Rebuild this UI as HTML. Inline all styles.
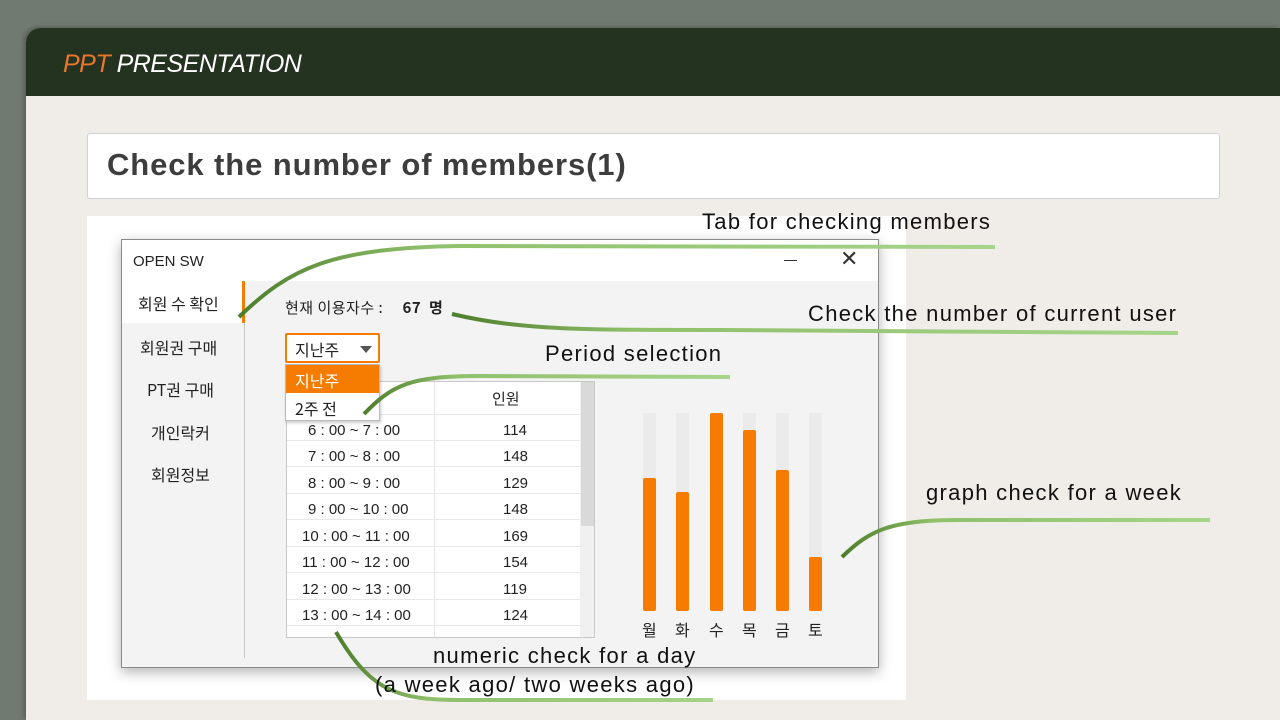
<!DOCTYPE html>
<html><head><meta charset="utf-8"><style>
*{margin:0;padding:0;box-sizing:border-box}
body{width:1280px;height:720px;overflow:hidden;background:#717a70;position:relative;font-family:"Liberation Sans","Noto Sans CJK KR",sans-serif}
.a{position:absolute}
.k{font-family:"Noto Sans CJK KR","Liberation Sans",sans-serif}
.ann{position:absolute;font-size:22px;color:#111;white-space:nowrap;letter-spacing:1.3px;font-family:"Liberation Sans","Noto Sans CJK KR",sans-serif}
.row{position:absolute;left:0;width:294px;height:26px;border-bottom:1px solid #e8e8e8;font-size:15px;color:#222}
.row span{position:absolute;top:7px}
</style></head><body>
<div class="a" style="left:26px;top:28px;width:1254px;height:692px;background:#f0ede8;border-top-left-radius:14px;overflow:hidden;box-shadow:-2px -1px 4px rgba(0,0,0,.25)">
 <div class="a" style="left:0;top:0;width:1254px;height:68px;background:#243220"></div>
 <div class="a" style="left:37px;top:22px;font-size:25px;font-style:italic;color:#fff;letter-spacing:-0.5px"><span style="color:#e8772e">PPT</span> PRESENTATION</div>
</div>
<div class="a" style="left:87px;top:133px;width:1133px;height:66px;background:#fff;border:1px solid #d0d0d8;border-radius:3px"></div>
<div class="a" style="left:107px;top:147px;font-size:31px;font-weight:bold;color:#3d3d3d;letter-spacing:0.9px">Check the number of members(1)</div>
<div class="a" style="left:87px;top:216px;width:819px;height:484px;background:#fff"></div>
<!-- window -->
<div class="a" style="left:121px;top:239px;width:758px;height:429px;background:#f3f3f3;border:1px solid #8a8a8a;box-shadow:0 4px 12px rgba(0,0,0,.3)">
 <div class="a" style="left:0;top:0;width:756px;height:41px;background:#fff"></div>
 <div class="a" style="left:11px;top:13px;font-size:15px;color:#222">OPEN SW</div>
 <div class="a" style="left:662px;top:20px;width:13px;height:1px;background:#333"></div>
 <div class="a" style="left:718px;top:6px;font-size:22px;color:#333;font-weight:300">✕</div>
 <div class="a" style="left:0;top:41px;width:123px;height:42px;background:#fff"></div>
 <div class="a" style="left:120px;top:41px;width:3px;height:42px;background:#f57c00"></div>
 <div class="a" style="left:122px;top:83px;width:1px;height:335px;background:#c8c8c8"></div>
 <div class="a k" style="left:16px;top:51px;font-size:16px;color:#222">회원 수 확인</div>
 <div class="a k" style="left:18px;top:95px;font-size:16px;color:#222">회원권 구매</div>
 <div class="a k" style="left:25px;top:137px;font-size:16px;color:#222">PT권 구매</div>
 <div class="a k" style="left:29px;top:180px;font-size:16px;color:#222">개인락커</div>
 <div class="a k" style="left:29px;top:222px;font-size:16px;color:#222">회원정보</div>
 <div class="a k" style="left:163px;top:57px;font-size:15px;color:#222;letter-spacing:0.5px">현재 이용자수 :&nbsp;&nbsp;&nbsp;&nbsp;&nbsp;<b>67&nbsp; 명</b></div>
 <!-- table -->
 <div class="a" style="left:164px;top:141px;width:309px;height:257px;background:#fff;border:1px solid #c8c8c8;overflow:hidden">
  <div class="a" style="left:147px;top:0;width:1px;height:257px;background:#e4e4e4"></div>
  <div class="a" style="left:293px;top:0;width:15px;height:257px;background:#f0f0f0"></div>
  <div class="a" style="left:294px;top:0;width:13px;height:144px;background:#d9d9d9"></div>
  <div class="row" style="top:0;height:33px"><span class="k" style="left:205px;top:6px">인원</span></div>
  <div class="row" style="top:33px"><span style="left:21px">6 : 00 ~ 7 : 00</span><span style="left:216px">114</span></div>
  <div class="row" style="top:59px"><span style="left:21px">7 : 00 ~ 8 : 00</span><span style="left:216px">148</span></div>
  <div class="row" style="top:86px"><span style="left:21px">8 : 00 ~ 9 : 00</span><span style="left:216px">129</span></div>
  <div class="row" style="top:112px"><span style="left:21px">9 : 00 ~ 10 : 00</span><span style="left:216px">148</span></div>
  <div class="row" style="top:139px"><span style="left:15px">10 : 00 ~ 11 : 00</span><span style="left:216px">169</span></div>
  <div class="row" style="top:165px"><span style="left:15px">11 : 00 ~ 12 : 00</span><span style="left:216px">154</span></div>
  <div class="row" style="top:192px"><span style="left:15px">12 : 00 ~ 13 : 00</span><span style="left:216px">119</span></div>
  <div class="row" style="top:218px"><span style="left:15px">13 : 00 ~ 14 : 00</span><span style="left:216px">124</span></div>
  <div class="row" style="top:245px"><span style="left:15px">14 : 00 ~ 15 : 00</span><span style="left:216px">133</span></div>
 </div>
 <!-- dropdown -->
 <div class="a" style="left:163px;top:93px;width:95px;height:30px;background:#fff;border:2px solid #f57c00;border-radius:2px"></div>
 <div class="a k" style="left:173px;top:97px;font-size:16px;color:#222">지난주</div>
 <div class="a" style="left:238px;top:106px;width:0;height:0;border-left:6px solid transparent;border-right:6px solid transparent;border-top:7px solid #555"></div>
 <div class="a" style="left:163px;top:124px;width:95px;height:57px;background:#fff;border:1px solid #bbb;box-shadow:1px 2px 3px rgba(0,0,0,.2)"></div>
 <div class="a" style="left:164px;top:125px;width:93px;height:28px;background:#f57c00"></div>
 <div class="a k" style="left:173px;top:128px;font-size:16px;color:#fff">지난주</div>
 <div class="a k" style="left:173px;top:156px;font-size:16px;color:#222">2주 전</div>
 <!-- bars -->
 <div class="a" style="left:521px;top:173px;width:13px;height:198px;background:#ebebeb"></div>
 <div class="a" style="left:554px;top:173px;width:13px;height:198px;background:#ebebeb"></div>
 <div class="a" style="left:588px;top:173px;width:13px;height:198px;background:#ebebeb"></div>
 <div class="a" style="left:621px;top:173px;width:13px;height:198px;background:#ebebeb"></div>
 <div class="a" style="left:654px;top:173px;width:13px;height:198px;background:#ebebeb"></div>
 <div class="a" style="left:687px;top:173px;width:13px;height:198px;background:#ebebeb"></div>
 <div class="a" style="left:521px;top:238px;width:13px;height:133px;background:#f57c00;border-radius:2px"></div>
 <div class="a" style="left:554px;top:252px;width:13px;height:119px;background:#f57c00;border-radius:2px"></div>
 <div class="a" style="left:588px;top:173px;width:13px;height:198px;background:#f57c00;border-radius:2px"></div>
 <div class="a" style="left:621px;top:190px;width:13px;height:181px;background:#f57c00;border-radius:2px"></div>
 <div class="a" style="left:654px;top:230px;width:13px;height:141px;background:#f57c00;border-radius:2px"></div>
 <div class="a" style="left:687px;top:317px;width:13px;height:54px;background:#f57c00;border-radius:2px"></div>
 <div class="a k" style="left:520px;top:377px;font-size:16px;color:#222">월</div>
 <div class="a k" style="left:553px;top:377px;font-size:16px;color:#222">화</div>
 <div class="a k" style="left:587px;top:377px;font-size:16px;color:#222">수</div>
 <div class="a k" style="left:620px;top:377px;font-size:16px;color:#222">목</div>
 <div class="a k" style="left:653px;top:377px;font-size:16px;color:#222">금</div>
 <div class="a k" style="left:686px;top:377px;font-size:16px;color:#222">토</div>
</div>
<svg class="a" style="left:0;top:0" width="1280" height="720">
<defs><linearGradient id="g" x1="0" y1="0" x2="1" y2="0"><stop offset="0" stop-color="#4e7d2c"/><stop offset="0.25" stop-color="#8fc06a"/><stop offset="1" stop-color="#a6d48a"/></linearGradient></defs>
<g fill="none" stroke="url(#g)" stroke-width="4">
<path d="M239,317 C290,268 330,248 460,246 L995,247"/>
<path d="M452,314 C520,330 580,330 720,330 L1178,333"/>
<path d="M364,414 C392,385 410,376 480,376 L730,377"/>
<path d="M842,557 C870,530 890,520 960,520 L1210,520"/>
<path d="M336,632 C370,690 395,700 460,700 L713,700"/>
</g></svg>
<div class="ann" style="left:702px;top:209px">Tab for checking members</div>
<div class="ann" style="left:808px;top:301px">Check the number of current user</div>
<div class="ann" style="left:545px;top:341px">Period selection</div>
<div class="ann" style="left:926px;top:480px">graph check for a week</div>
<div class="ann" style="left:433px;top:643px">numeric check for a day</div>
<div class="ann" style="left:375px;top:672px">(a week ago/ two weeks ago)</div>
</body></html>
